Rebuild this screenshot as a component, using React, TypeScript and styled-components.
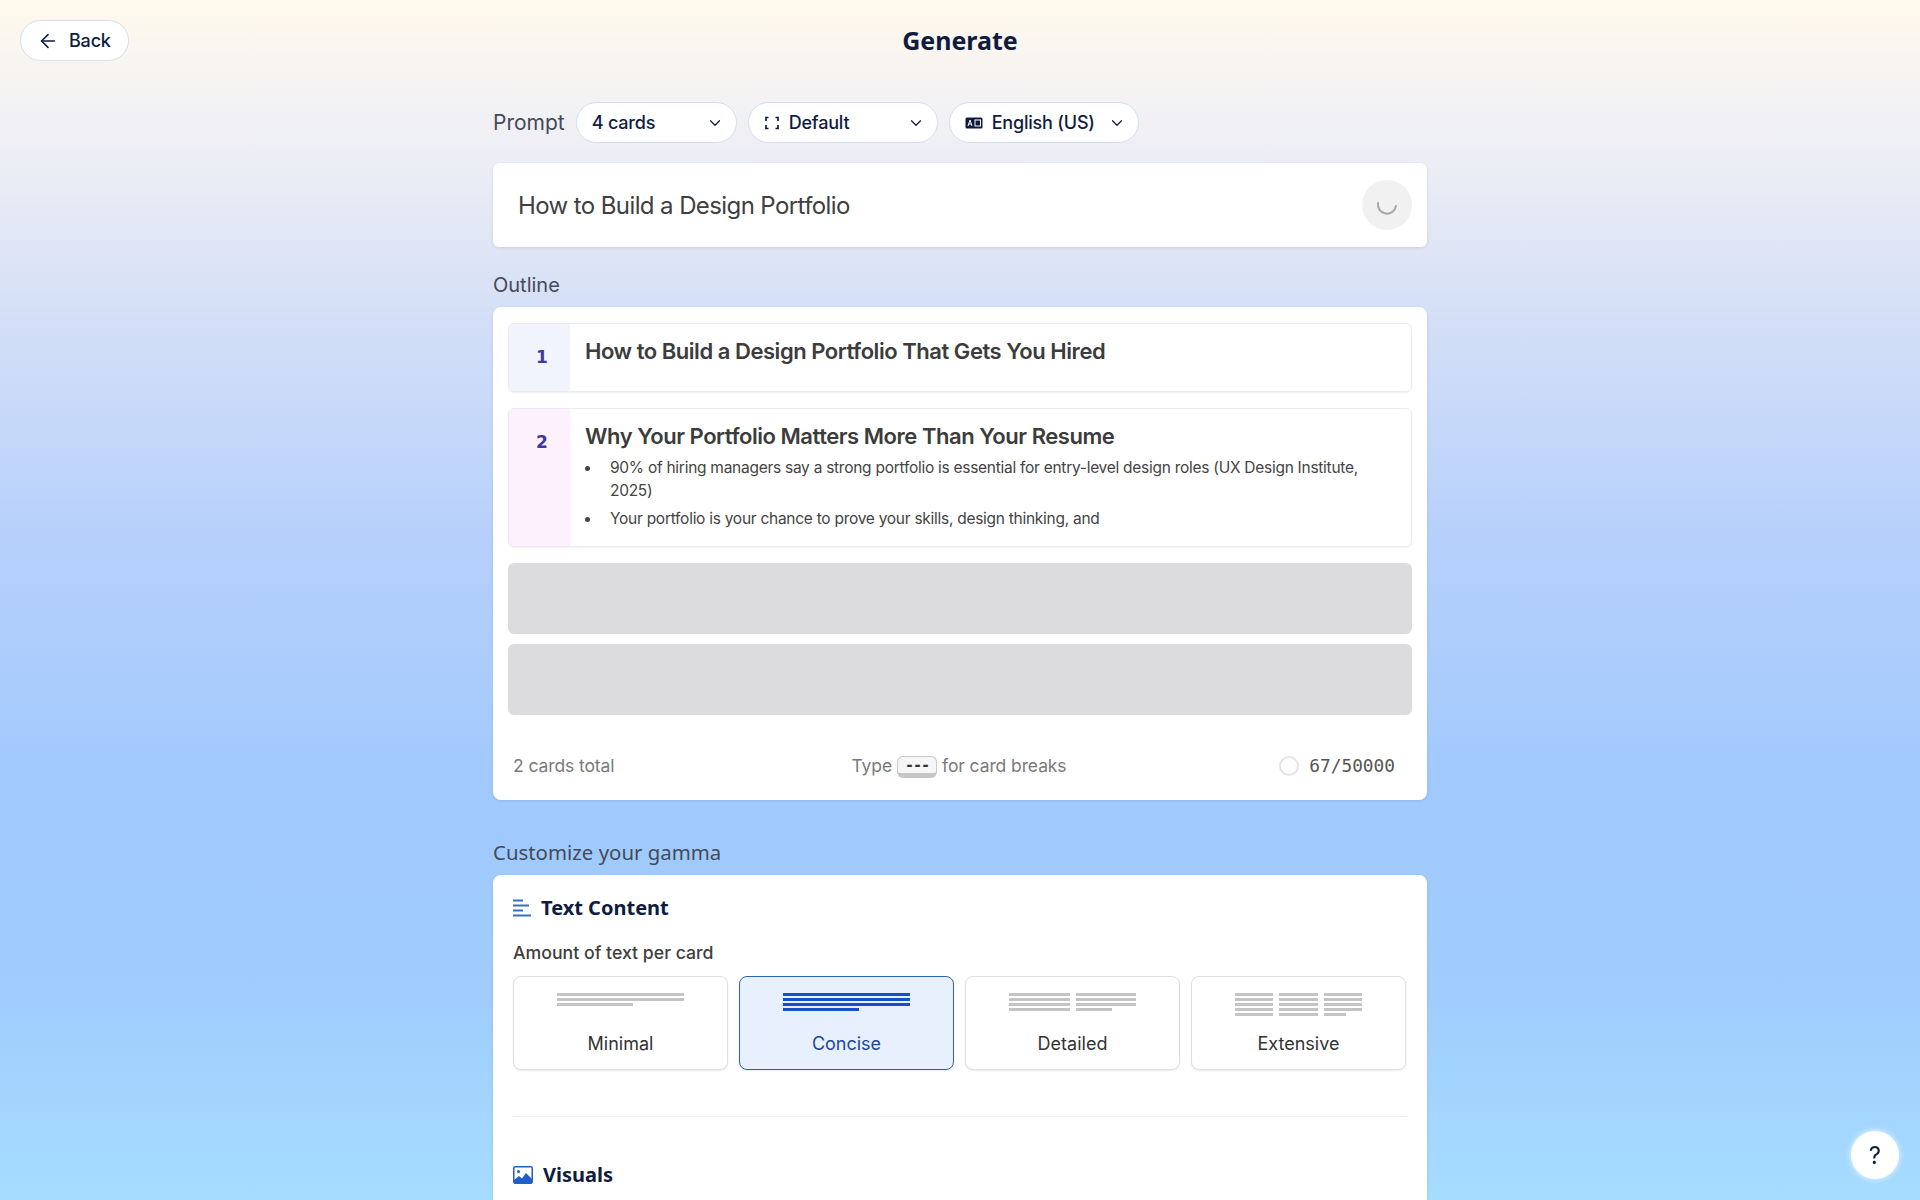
import { ReactNode } from 'react';
import styled, { createGlobalStyle } from 'styled-components';
import { ArrowLeft, ChevronDown } from 'lucide-react';

const GlobalStyle = createGlobalStyle`
  html, body {
    margin: 0;
    height: 100%;
    overflow: hidden;
  }
  * {
    box-sizing: border-box;
  }
`;

const Page = styled.div`
  height: 1200px;
  overflow: hidden;
  font-family: Inter, "Noto Sans", sans-serif;
  color: #3a3a3a;
  background: linear-gradient(
    180deg,
    #fff9ec 0px,
    #f3f2f4 100px,
    #e9ebf5 190px,
    #d8e1f6 290px,
    #b6d0fb 540px,
    #a0c9fd 800px,
    #a0cdfd 1000px,
    #a6dcff 1200px
  );
`;

const Header = styled.header`
  display: grid;
  grid-template-columns: 1fr auto 1fr;
  align-items: center;
  padding: 20px 20px 0;
  height: 102px;
  align-content: start;
`;

const Pill = styled.button`
  display: flex;
  align-items: center;
  height: 41px;
  background: #fff;
  border: 1px solid #d3def0;
  border-radius: 21px;
  font-family: inherit;
  font-size: 18px;
  font-weight: 500;
  letter-spacing: -0.2px;
  color: #0f1c3f;
  padding: 0 16px;
`;

const BackButton = styled(Pill)`
  justify-self: start;
  width: 109px;
  gap: 10px;
`;

const Title = styled.h1`
  margin: 0;
  font-family: "Noto Sans", Inter, sans-serif;
  font-size: 25px;
  font-weight: 700;
  line-height: 41px;
  color: #0f1c3f;
`;

const Main = styled.main`
  width: 934px;
  margin: 0 auto;
`;

const PromptRow = styled.div`
  display: flex;
  align-items: center;
  gap: 11px;
`;

const SectionLabel = styled.div`
  font-size: 20px;
  color: #444a57;
  line-height: 26px;
`;

const PromptLabel = styled(SectionLabel)`
  font-size: 21px;
`;

const Select = styled(Pill)<{ $width: number }>`
  width: ${(p) => p.$width}px;
  padding: 0 12px 0 15px;
  gap: 9px;
  svg:last-child {
    margin-left: auto;
  }
`;

const PromptCard = styled.div`
  display: flex;
  align-items: center;
  justify-content: space-between;
  height: 84px;
  margin-top: 20px;
  padding: 0 15px 0 25px;
  background: #fff;
  border-radius: 6px;
  box-shadow: 0 1px 3px rgba(60, 80, 130, 0.15);
  font-size: 24px;
  letter-spacing: -0.6px;
  color: #404040;
`;

const SpinnerWrap = styled.div`
  width: 50px;
  height: 50px;
  border-radius: 50%;
  background: #f1f1f2;
  display: flex;
  align-items: center;
  justify-content: center;
`;

const OutlineLabel = styled(SectionLabel)`
  margin-top: 25px;
`;

const Card = styled.section`
  background: #fff;
  border-radius: 8px;
  box-shadow: 0 1px 3px rgba(60, 80, 130, 0.15);
`;

const OutlineCard = styled(Card)`
  margin-top: 9px;
  height: 493px;
  padding: 16px 15px 0;
`;

const Row = styled.div<{ $height: number }>`
  display: flex;
  height: ${(p) => p.$height}px;
  margin-bottom: 16px;
  border: 1px solid #ebebeb;
  border-radius: 6px;
  box-shadow: 0 1px 2px rgba(0, 0, 0, 0.06);
  overflow: hidden;
`;

const RowNumber = styled.div<{ $bg: string }>`
  flex: 0 0 61px;
  padding: 21px 0 0 5px;
  background: ${(p) => p.$bg};
  text-align: center;
  font-family: "DejaVu Sans", sans-serif;
  font-size: 17px;
  font-weight: 600;
  line-height: 24px;
  color: #3d3a9c;
`;

const RowBody = styled.div`
  flex: 1;
  padding: 12px 15px 0;
`;

const RowTitle = styled.h3`
  margin: 0;
  font-size: 22px;
  font-weight: 600;
  letter-spacing: -0.46px;
  line-height: 30px;
  color: #3c3c3c;
`;

const Bullets = styled.ul`
  margin: 6px 0 0;
  padding: 0 0 0 25px;
  list-style: none;
  font-size: 15.5px;
  line-height: 22.5px;
  letter-spacing: -0.27px;
  color: #444;
  li {
    position: relative;
    margin-bottom: 5.5px;
  }
  li::before {
    content: '';
    position: absolute;
    left: -25px;
    top: 9px;
    width: 5px;
    height: 5px;
    border-radius: 50%;
    background: #444;
  }
`;

const Skeleton = styled.div`
  height: 71px;
  margin-bottom: 10px;
  background: #dcdcde;
  border-radius: 6px;
`;

const Footer = styled.div`
  display: grid;
  grid-template-columns: 1fr auto 1fr;
  align-items: center;
  margin-top: 38px;
  padding: 0 17px 0 5px;
  font-size: 17.5px;
  letter-spacing: -0.1px;
  color: #7a7a7a;
`;

const BreakHint = styled.div`
  display: flex;
  align-items: center;
  gap: 5px;
  margin-left: 10px;
`;

const Kbd = styled.span`
  display: inline-block;
  width: 40px;
  height: 22px;
  margin-top: 3px;
  border: 1px solid #c9c9c9;
  border-bottom: 5px solid #c6c6c6;
  border-radius: 6px;
  background: #f6f6f6;
  font-family: "DejaVu Sans Mono", monospace;
  font-size: 15px;
  font-weight: 700;
  letter-spacing: -1px;
  line-height: 16px;
  text-align: center;
  color: #333;
`;

const Counter = styled.div`
  justify-self: end;
  display: flex;
  align-items: center;
  gap: 10px;
  font-family: "DejaVu Sans Mono", monospace;
  font-size: 17.8px;
  letter-spacing: 0;
  color: #555;
`;

const Ring = styled.span`
  width: 20px;
  height: 20px;
  border: 2px solid #e5e5e5;
  border-radius: 50%;
`;

const CustomizeLabel = styled(SectionLabel)`
  margin-top: 39px;
  font-family: "Noto Sans", Inter, sans-serif;
  font-size: 20.4px;
`;

const CustomizeCard = styled(Card)`
  margin-top: 10px;
  padding: 19px 20px 40px;
`;

const GroupHeading = styled.h2`
  display: flex;
  align-items: center;
  gap: 10px;
  margin: 0;
  font-family: "Noto Sans", Inter, sans-serif;
  font-size: 20px;
  font-weight: 700;
  line-height: 28px;
  color: #0f1c3f;
`;

const FieldLabel = styled.div`
  margin-top: 19px;
  font-size: 17.7px;
  font-weight: 500;
  line-height: 24px;
  color: #3e3e3e;
`;

const Options = styled.div`
  display: grid;
  grid-template-columns: repeat(4, 215px);
  gap: 11px;
  margin-top: 11px;
`;

const Option = styled.div<{ $selected?: boolean }>`
  height: 94px;
  padding-top: 16px;
  display: flex;
  flex-direction: column;
  align-items: center;
  border: 1.5px solid ${(p) => (p.$selected ? '#2c62ad' : '#e0e0e0')};
  border-radius: 8px;
  box-shadow: 0 1px 2px rgba(0, 0, 0, 0.08);
  background: ${(p) => (p.$selected ? '#e8f0fd' : '#fff')};
  color: ${(p) => (p.$selected ? '#1c46a0' : '#333')};
  font-size: 18px;
`;

const OptionText = styled.div`
  margin-top: auto;
  padding-bottom: 13px;
  line-height: 24px;
`;

const Columns = styled.div`
  display: flex;
  gap: 6px;
  width: 127px;
  height: 22px;
`;

const Column = styled.div`
  flex: 1;
  display: flex;
  flex-direction: column;
  gap: 2px;
`;

const Line = styled.div<{ $selected?: boolean; $short?: number }>`
  flex: 0 0 3px;
  width: ${(p) => p.$short ?? 100}%;
  background: ${(p) => (p.$selected ? '#1650c8' : '#c4c4c4')};
`;

const Divider = styled.hr`
  margin: 46px 0 0;
  border: 0;
  border-top: 1px solid #eeeeee;
`;

const VisualsHeading = styled(GroupHeading)`
  margin-top: 44px;
`;

const HelpButton = styled.button`
  position: fixed;
  right: 21px;
  bottom: 21px;
  width: 48px;
  height: 48px;
  border: 0;
  border-radius: 50%;
  background: #fff;
  box-shadow: 0 0 6px rgba(255, 255, 255, 0.8);
  font-family: Inter, sans-serif;
  font-size: 24px;
  color: #0f1c3f;
`;

const CornersIcon = () => (
  <svg width="16" height="16" viewBox="0 0 16 16" fill="none" stroke="#0f1c3f" strokeWidth="1.7">
    <path d="M4.5 2.5H2v3.5M11.5 2.5H14v3.5M4.5 13.5H2V10M11.5 13.5H14V10" />
  </svg>
);

const LanguageIcon = () => (
  <svg width="18" height="14" viewBox="0 0 18 14">
    <rect x="0.5" y="1.5" width="17" height="11" rx="1.5" fill="#0f1c3f" />
    <path d="M3 10l2-6 2 6M3.8 8h2.4" fill="none" stroke="#fff" strokeWidth="1" />
    <rect x="10" y="4" width="5.5" height="6" fill="none" stroke="#fff" strokeWidth="1" />
  </svg>
);

const Spinner = () => (
  <svg width="24" height="24" viewBox="0 0 24 24" fill="none">
    <path d="M3 10a9 9 0 0 0 18 3" stroke="#a8a8a8" strokeWidth="2" strokeLinecap="round" />
  </svg>
);

const TextIcon = () => (
  <svg width="18" height="18" viewBox="0 0 18 18" stroke="#3a6fc0" strokeWidth="1.8">
    <path d="M0 1.5h10M0 6.5h16M0 11.5h10M0 16.5h18" />
  </svg>
);

const VisualsIcon = () => (
  <svg width="20" height="18" viewBox="0 0 20 18">
    <rect x="0.75" y="0.75" width="18.5" height="16.5" rx="1.5" fill="#fff" stroke="#1f5fc8" strokeWidth="1.5" />
    <circle cx="5.5" cy="5.5" r="1.5" fill="#1f5fc8" />
    <path d="M1 17v-3l5-4 3 2.5L13 7l6 6v4z" fill="#1f5fc8" />
  </svg>
);

const Lines = ({ columns, count, last, selected }: { columns: number; count: number; last: number; selected?: boolean }) => (
  <Columns>
    {Array.from({ length: columns }, (_, c) => (
      <Column key={c}>
        {Array.from({ length: count }, (_, i) => (
          <Line key={i} $selected={selected} $short={c === columns - 1 && i === count - 1 ? last : undefined} />
        ))}
      </Column>
    ))}
  </Columns>
);

const OptionCard = ({ label, selected, children }: { label: string; selected?: boolean; children: ReactNode }) => (
  <Option $selected={selected}>
    {children}
    <OptionText>{label}</OptionText>
  </Option>
);

export default function App() {
  return (
    <Page>
      <GlobalStyle />
      <Header>
        <BackButton>
          <ArrowLeft size={22} strokeWidth={1.75} />
          Back
        </BackButton>
        <Title>Generate</Title>
      </Header>
      <Main>
        <PromptRow>
          <PromptLabel>Prompt</PromptLabel>
          <Select $width={161}>
            4 cards
            <ChevronDown size={18} strokeWidth={1.6} />
          </Select>
          <Select $width={190}>
            <CornersIcon />
            Default
            <ChevronDown size={18} strokeWidth={1.6} />
          </Select>
          <Select $width={190}>
            <LanguageIcon />
            English (US)
            <ChevronDown size={18} strokeWidth={1.6} />
          </Select>
        </PromptRow>
        <PromptCard>
          How to Build a Design Portfolio
          <SpinnerWrap>
            <Spinner />
          </SpinnerWrap>
        </PromptCard>
        <OutlineLabel>Outline</OutlineLabel>
        <OutlineCard>
          <Row $height={69}>
            <RowNumber $bg="#f1f4fd">1</RowNumber>
            <RowBody>
              <RowTitle>How to Build a Design Portfolio That Gets You Hired</RowTitle>
            </RowBody>
          </Row>
          <Row $height={139}>
            <RowNumber $bg="#fdf1fd">2</RowNumber>
            <RowBody>
              <RowTitle>Why Your Portfolio Matters More Than Your Resume</RowTitle>
              <Bullets>
                <li>90% of hiring managers say a strong portfolio is essential for entry-level design roles (UX Design Institute, 2025)</li>
                <li>Your portfolio is your chance to prove your skills, design thinking, and</li>
              </Bullets>
            </RowBody>
          </Row>
          <Skeleton />
          <Skeleton />
          <Footer>
            <span>2 cards total</span>
            <BreakHint>
              Type <Kbd>---</Kbd> for card breaks
            </BreakHint>
            <Counter>
              <Ring />
              67/50000
            </Counter>
          </Footer>
        </OutlineCard>
        <CustomizeLabel>Customize your gamma</CustomizeLabel>
        <CustomizeCard>
          <GroupHeading>
            <TextIcon />
            Text Content
          </GroupHeading>
          <FieldLabel>Amount of text per card</FieldLabel>
          <Options>
            <OptionCard label="Minimal">
              <Lines columns={1} count={3} last={60} />
            </OptionCard>
            <OptionCard label="Concise" selected>
              <Lines columns={1} count={4} last={60} selected />
            </OptionCard>
            <OptionCard label="Detailed">
              <Lines columns={2} count={4} last={60} />
            </OptionCard>
            <OptionCard label="Extensive">
              <Lines columns={3} count={5} last={58} />
            </OptionCard>
          </Options>
          <Divider />
          <VisualsHeading>
            <VisualsIcon />
            Visuals
          </VisualsHeading>
        </CustomizeCard>
      </Main>
      <HelpButton>?</HelpButton>
    </Page>
  );
}
